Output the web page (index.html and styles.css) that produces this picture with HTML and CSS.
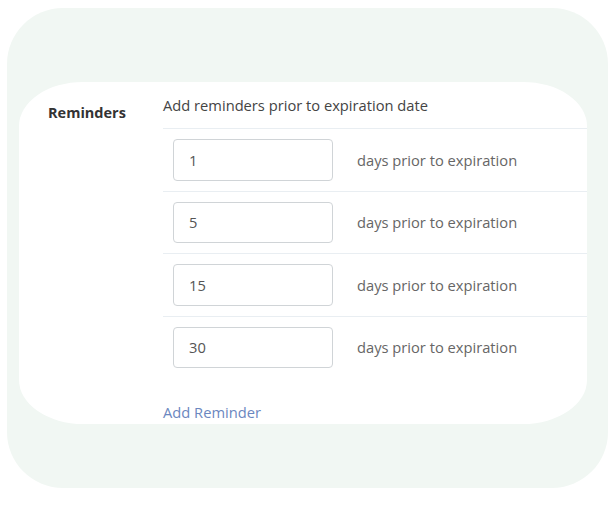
FILE: index.html
```html
<!DOCTYPE html>
<html lang="en">
<head>
    <meta charset="UTF-8">
    <meta name="viewport" content="width=device-width, initial-scale=1.0">
    <title>Reminders</title>
    <link rel="stylesheet" href="styles.css">
</head>
<body>
    <div class="outer-panel">
        <div class="reminder-card">
            <div class="reminder-label">Reminders</div>
            <div class="reminder-body">
                <div class="reminder-intro">Add reminders prior to expiration date</div>
                <div class="reminder-row">
                    <input type="text" class="reminder-input" value="1">
                    <span class="reminder-text">days prior to expiration</span>
                </div>
                <div class="reminder-row">
                    <input type="text" class="reminder-input" value="5">
                    <span class="reminder-text">days prior to expiration</span>
                </div>
                <div class="reminder-row">
                    <input type="text" class="reminder-input" value="15">
                    <span class="reminder-text">days prior to expiration</span>
                </div>
                <div class="reminder-row">
                    <input type="text" class="reminder-input" value="30">
                    <span class="reminder-text">days prior to expiration</span>
                </div>
                <a href="#" class="add-reminder">Add Reminder</a>
            </div>
        </div>
    </div>
</body>
</html>
```

FILE: styles.css
```css
/* Global styles */
body {
    font-family: 'Open Sans', 'Noto Sans', sans-serif;
    font-size: 14.7px;
    margin: 0;
    background: #fff;
}

.outer-panel {
    margin: 8px 0 0 7px;
    width: 601px;
    height: 480px;
    box-sizing: border-box;
    padding: 74px 0 0 12px;
    background: #f1f7f3;
    border-radius: 56px;
}

.reminder-card {
    display: flex;
    width: 568px;
    height: 342px;
    box-sizing: border-box;
    padding: 12px 0 0 29px;
    background: #fff;
    border-radius: 64px / 44px;
}

.reminder-label {
    width: 115px;
    flex-shrink: 0;
    padding-top: 9px;
    font-size: 14.5px;
    font-weight: bold;
    color: #333;
    line-height: 20px;
}

.reminder-body {
    flex: 1;
}

.reminder-intro {
    color: #444;
    line-height: 20px;
    padding: 1px 0 13px;
}

.reminder-row {
    display: flex;
    align-items: center;
    border-top: 1px solid #e9eef2;
    padding: 10px 0 10px 10px;
}

.reminder-row:last-of-type {
    padding-bottom: 0;
}

.reminder-input {
    width: 160px;
    height: 41.5px;
    box-sizing: border-box;
    padding: 0 15px;
    border: 1px solid #d0d4d7;
    border-radius: 4px;
    font-family: inherit;
    font-size: 14.7px;
    color: #555;
    outline: none;
}

.reminder-text {
    margin-left: 24px;
    color: #666;
}

.add-reminder {
    display: inline-block;
    margin-top: 34px;
    color: #6b87c0;
    text-decoration: none;
    line-height: 20px;
}
```
